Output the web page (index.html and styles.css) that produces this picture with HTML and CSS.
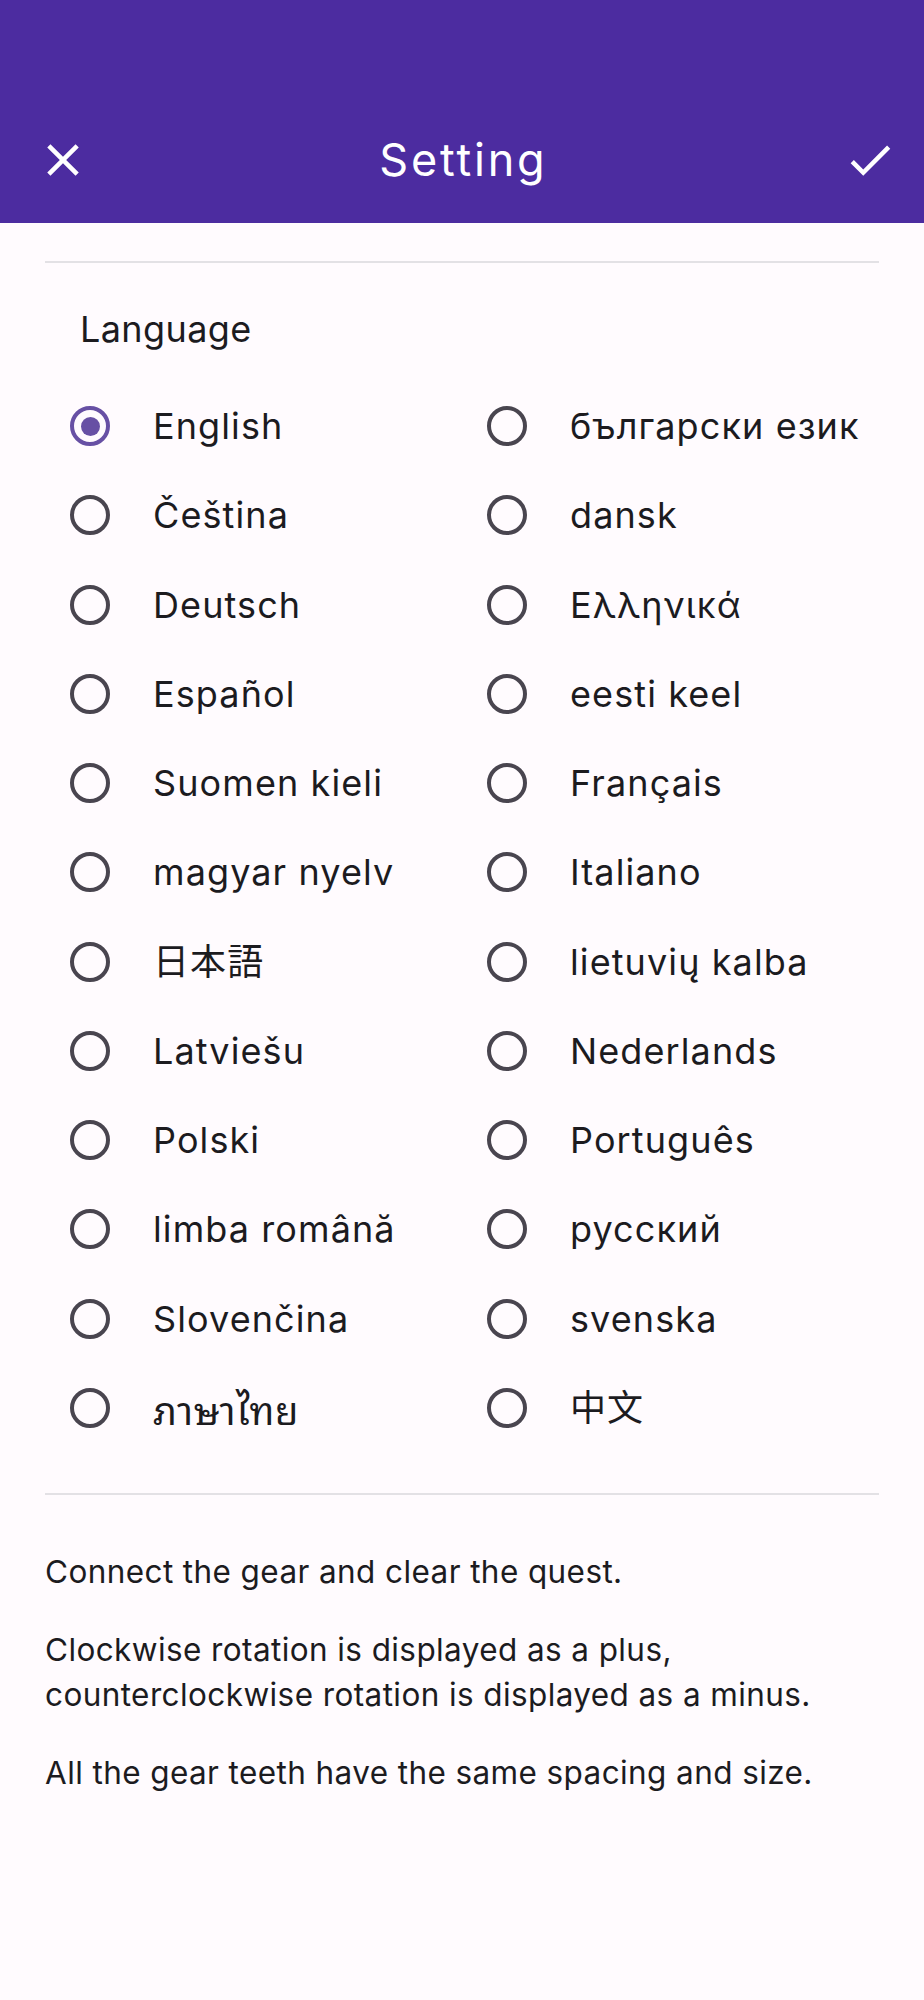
FILE: index.html
```html
<!DOCTYPE html>
<html lang="en">
<head>
<meta charset="utf-8">
<title>Setting</title>
<link rel="stylesheet" href="styles.css">
</head>
<body>
<header class="appbar">
  <div class="toolbar">
    <button class="icon-btn close" aria-label="Close">
      <svg viewBox="0 0 24 24"><path d="M19 6.41L17.59 5 12 10.59 6.41 5 5 6.41 10.59 12 5 17.59 6.41 19 12 13.41 17.59 19 19 17.59 13.41 12z"/></svg>
    </button>
    <h1 class="title">Setting</h1>
    <button class="icon-btn check" aria-label="Save">
      <svg viewBox="0 0 24 24"><path d="M9 16.17L4.83 12l-1.42 1.41L9 19 21 7l-1.41-1.41z"/></svg>
    </button>
  </div>
</header>
<main class="content">
  <hr class="divider divider-top">
  <h2 class="section-label">Language</h2>
  <div class="lang-grid" role="radiogroup">
    <div class="option selected" role="radio" aria-checked="true"><span class="radio"></span><span class="name">English</span></div>
    <div class="option" role="radio"><span class="radio"></span><span class="name" lang="bg">български език</span></div>
    <div class="option" role="radio"><span class="radio"></span><span class="name" lang="cs">Čeština</span></div>
    <div class="option" role="radio"><span class="radio"></span><span class="name" lang="da">dansk</span></div>
    <div class="option" role="radio"><span class="radio"></span><span class="name" lang="de">Deutsch</span></div>
    <div class="option" role="radio"><span class="radio"></span><span class="name" lang="el">Ελληνικά</span></div>
    <div class="option" role="radio"><span class="radio"></span><span class="name" lang="es">Español</span></div>
    <div class="option" role="radio"><span class="radio"></span><span class="name" lang="et">eesti keel</span></div>
    <div class="option" role="radio"><span class="radio"></span><span class="name" lang="fi">Suomen kieli</span></div>
    <div class="option" role="radio"><span class="radio"></span><span class="name" lang="fr">Français</span></div>
    <div class="option" role="radio"><span class="radio"></span><span class="name" lang="hu">magyar nyelv</span></div>
    <div class="option" role="radio"><span class="radio"></span><span class="name" lang="it">Italiano</span></div>
    <div class="option" role="radio"><span class="radio"></span><span class="name name-ja" lang="ja">日本語</span></div>
    <div class="option" role="radio"><span class="radio"></span><span class="name" lang="lt">lietuvių kalba</span></div>
    <div class="option" role="radio"><span class="radio"></span><span class="name" lang="lv">Latviešu</span></div>
    <div class="option" role="radio"><span class="radio"></span><span class="name" lang="nl">Nederlands</span></div>
    <div class="option" role="radio"><span class="radio"></span><span class="name" lang="pl">Polski</span></div>
    <div class="option" role="radio"><span class="radio"></span><span class="name" lang="pt">Português</span></div>
    <div class="option" role="radio"><span class="radio"></span><span class="name" lang="ro">limba română</span></div>
    <div class="option" role="radio"><span class="radio"></span><span class="name" lang="ru">русский</span></div>
    <div class="option" role="radio"><span class="radio"></span><span class="name" lang="sk">Slovenčina</span></div>
    <div class="option" role="radio"><span class="radio"></span><span class="name" lang="sv">svenska</span></div>
    <div class="option" role="radio"><span class="radio"></span><span class="name name-th" lang="th">ภาษาไทย</span></div>
    <div class="option" role="radio"><span class="radio"></span><span class="name name-zh" lang="zh">中文</span></div>
  </div>
  <hr class="divider divider-bottom">
  <div class="notes">
    <p>Connect the gear and clear the quest.</p>
    <p>Clockwise rotation is displayed as a plus, counterclockwise rotation is displayed as a minus.</p>
    <p>All the gear teeth have the same spacing and size.</p>
  </div>
</main>
</body>
</html>
```

FILE: styles.css
```css
* {
  box-sizing: border-box;
}

body {
  margin: 0;
  background: #fffbfe;
  color: #1c1b1f;
  font-family: Inter, "Noto Sans", "DejaVu Sans", sans-serif;
}

.appbar {
  background: #4c2ca0;
  height: 223px;
  padding-top: 97px;
}

.toolbar {
  height: 126px;
  display: grid;
  grid-template-columns: 1fr auto 1fr;
  align-items: center;
}

.icon-btn {
  width: 108px;
  height: 108px;
  padding: 0;
  border: 0;
  background: none;
  display: flex;
  align-items: center;
  justify-content: center;
}

.icon-btn svg {
  width: 54px;
  height: 54px;
  fill: #ffffff;
}

.close {
  justify-self: start;
  margin-left: 9px;
}

.check {
  justify-self: end;
}

.title {
  margin: 0;
  color: #ffffff;
  font-size: 45px;
  font-weight: 400;
  line-height: 54px;
  letter-spacing: 2.8px;
  padding-left: 2.8px;
}

.content {
  padding: 0 45px;
}

.divider {
  margin: 0;
  border: 0;
  height: 2px;
  background: #e3e1e5;
}

.divider-top {
  margin-top: 38px;
}

.section-label {
  margin: 44px 0 0;
  padding-left: 35px;
  font-size: 36px;
  font-weight: 400;
  line-height: 44px;
  letter-spacing: 0.4px;
}

.lang-grid {
  margin-top: 30.5px;
  display: grid;
  grid-template-columns: 1fr 1fr;
  grid-auto-rows: 89.25px;
}

.option {
  display: flex;
  align-items: center;
}

.radio {
  flex: none;
  width: 40px;
  height: 40px;
  margin-left: 25px;
  margin-right: 43px;
  border: 4.5px solid #49454f;
  border-radius: 50%;
  display: flex;
  align-items: center;
  justify-content: center;
}

.option.selected .radio {
  border-color: #6750a4;
}

.option.selected .radio::after {
  content: "";
  width: 19px;
  height: 19px;
  border-radius: 50%;
  background: #6750a4;
}

.name {
  font-size: 36px;
  line-height: 44px;
  letter-spacing: 1.1px;
  white-space: nowrap;
}

.name-ja {
  font-family: Inter, "Noto Sans CJK JP", sans-serif;
}

.name-zh {
  font-family: Inter, "Noto Sans CJK SC", sans-serif;
}

.name-th {
  font-family: "Noto Sans Thai Looped", "Noto Sans Thai", Loma, Garuda, sans-serif;
  font-size: 38px;
  letter-spacing: 0.6px;
}

.divider-bottom {
  margin-top: 40px;
}

.notes {
  padding-top: 54px;
}

.notes p {
  margin: 0 0 33px;
  font-size: 31.5px;
  line-height: 45px;
  letter-spacing: 0.4px;
}
```
